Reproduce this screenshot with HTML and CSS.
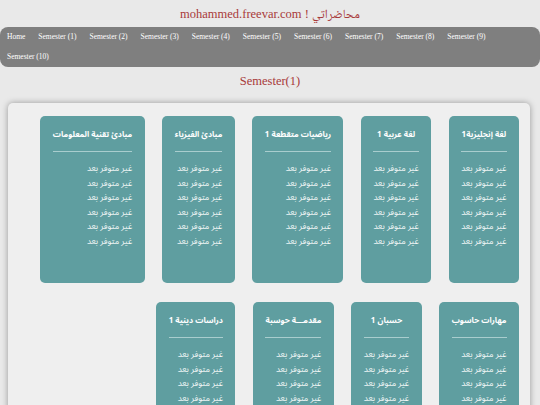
FILE: index.html
```html
<!DOCTYPE html>
<html lang="ar">
<head>
<meta charset="utf-8">
<title>محاضراتي</title>
<link rel="stylesheet" href="styles.css">
</head>
<body>
<h1 class="site-title">mohammed.freevar.com ! محاضراتي</h1>
<nav class="menu">
  <a href="#">Home</a>
  <a href="#">Semester (1)</a>
  <a href="#">Semester (2)</a>
  <a href="#">Semester (3)</a>
  <a href="#">Semester (4)</a>
  <a href="#">Semester (5)</a>
  <a href="#">Semester (6)</a>
  <a href="#">Semester (7)</a>
  <a href="#">Semester (8)</a>
  <a href="#">Semester (9)</a>
  <a href="#">Semester (10)</a>
</nav>
<h2 class="page-title">Semester(1)</h2>
<main class="panel">
  <div class="cards" dir="rtl">
    <section class="card"><h3>لغة إنجليزية1</h3><ul><li>غير متوفر بعد</li><li>غير متوفر بعد</li><li>غير متوفر بعد</li><li>غير متوفر بعد</li><li>غير متوفر بعد</li><li>غير متوفر بعد</li></ul></section>
    <section class="card"><h3>لغة عربية 1</h3><ul><li>غير متوفر بعد</li><li>غير متوفر بعد</li><li>غير متوفر بعد</li><li>غير متوفر بعد</li><li>غير متوفر بعد</li><li>غير متوفر بعد</li></ul></section>
    <section class="card"><h3>رياضيات متقطعة 1</h3><ul><li>غير متوفر بعد</li><li>غير متوفر بعد</li><li>غير متوفر بعد</li><li>غير متوفر بعد</li><li>غير متوفر بعد</li><li>غير متوفر بعد</li></ul></section>
    <section class="card"><h3>مبادئ الفيزياء</h3><ul><li>غير متوفر بعد</li><li>غير متوفر بعد</li><li>غير متوفر بعد</li><li>غير متوفر بعد</li><li>غير متوفر بعد</li><li>غير متوفر بعد</li></ul></section>
    <section class="card"><h3>مبادئ تقنية المعلومات</h3><ul><li>غير متوفر بعد</li><li>غير متوفر بعد</li><li>غير متوفر بعد</li><li>غير متوفر بعد</li><li>غير متوفر بعد</li><li>غير متوفر بعد</li></ul></section>
    <section class="card"><h3>مهارات حاسوب</h3><ul><li>غير متوفر بعد</li><li>غير متوفر بعد</li><li>غير متوفر بعد</li><li>غير متوفر بعد</li><li>غير متوفر بعد</li><li>غير متوفر بعد</li></ul></section>
    <section class="card"><h3>حسبان 1</h3><ul><li>غير متوفر بعد</li><li>غير متوفر بعد</li><li>غير متوفر بعد</li><li>غير متوفر بعد</li><li>غير متوفر بعد</li><li>غير متوفر بعد</li></ul></section>
    <section class="card"><h3>مقدمـــة حوسبة</h3><ul><li>غير متوفر بعد</li><li>غير متوفر بعد</li><li>غير متوفر بعد</li><li>غير متوفر بعد</li><li>غير متوفر بعد</li><li>غير متوفر بعد</li></ul></section>
    <section class="card"><h3>دراسات دينية 1</h3><ul><li>غير متوفر بعد</li><li>غير متوفر بعد</li><li>غير متوفر بعد</li><li>غير متوفر بعد</li><li>غير متوفر بعد</li><li>غير متوفر بعد</li></ul></section>
  </div>
</main>
</body>
</html>
```

FILE: styles.css
```css
html, body {
  margin: 0;
  padding: 0;
  background: #e9e9e9;
}
body {
  font-family: "Liberation Serif", "Noto Naskh Arabic", serif;
}
.site-title {
  margin: 0;
  padding-top: 6px;
  height: 21px;
  font-size: 12.5px;
  line-height: 16px;
  font-weight: normal;
  text-align: center;
  color: #a83a3a;
}
.menu {
  display: flex;
  flex-wrap: wrap;
  background: #7f7f7f;
  border-radius: 8px;
  padding: 0 0 0 0.5px;
}
.menu a {
  display: block;
  color: #ffffff;
  text-decoration: none;
  font-size: 7.5px;
  line-height: 20px;
  padding: 0 6.5px;
}
.page-title {
  margin: 0;
  padding-top: 6px;
  height: 29px;
  font-size: 12.5px;
  line-height: 16px;
  font-weight: normal;
  text-align: center;
  color: #a83a3a;
}
.panel {
  display: block;
  margin: 1px 10px 0 8px;
  background: #efefef;
  border-radius: 5px;
  box-shadow: 0 0 6px rgba(0, 0, 0, 0.35);
  padding: 13px 11px 20px 11px;
}
.cards {
  display: flex;
  flex-wrap: wrap;
  align-items: flex-start;
  column-gap: 17.5px;
  row-gap: 19px;
}
.card {
  background: #5f9ea0;
  border-radius: 5px;
  padding: 11px 12.5px 35px 12.5px;
  font-family: "Noto Sans Arabic", "DejaVu Sans", sans-serif;
  color: #ffffff;
}
.card h3 {
  margin: 0;
  font-size: 8px;
  line-height: 16px;
  font-weight: bold;
  text-align: center;
  white-space: nowrap;
  padding-bottom: 8px;
  border-bottom: 1px solid #a9cdce;
  margin-bottom: 9px;
}
.card ul {
  list-style: none;
  margin: 0;
  padding: 0;
}
.card li {
  font-size: 8.5px;
  line-height: 14.5px;
  text-align: right;
  white-space: nowrap;
  color: #f2f7f7;
}
```
